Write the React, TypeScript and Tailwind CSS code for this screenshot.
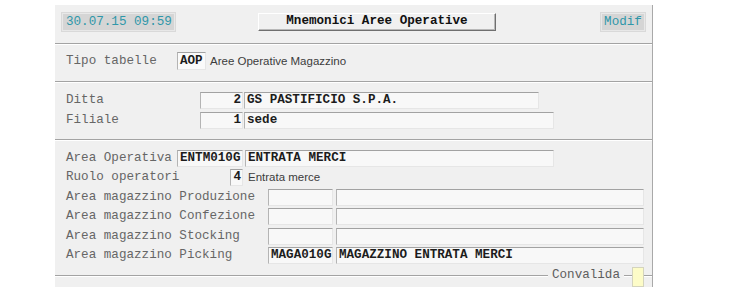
import React from 'react'

const mono = "font-['Liberation_Mono','Courier_New',monospace] text-[12.6px]"
const sans = "font-['Liberation_Sans',Arial,sans-serif] text-[11.5px] text-[#3c3c3c]"

function Sep() {
  return <div className="h-[2px] border-t border-[#a3a3a3] bg-white" />
}

function Box({ w, value = '', align = 'left' }: { w: string; value?: string; align?: 'left' | 'right' }) {
  return (
    <div
      className={`${w} h-[17px] shrink-0 bg-[#f8f8f8] border border-t-[#a2a2a2] border-l-[#b4b4b4] border-r-[#e6e6e6] border-b-[#e6e6e6] ${mono} font-bold text-[#1c1c1c] leading-[15px] whitespace-pre overflow-hidden ${
        align === 'right' ? 'text-right pr-[1px]' : 'pl-[2px]'
      }`}
    >
      {value}
    </div>
  )
}

function Label({ w, children }: { w: string; children: React.ReactNode }) {
  return <div className={`${w} shrink-0 ${mono} text-[#666666] leading-[17px] whitespace-pre`}>{children}</div>
}

export default function App() {
  return (
    <div className="w-[733px] h-[287px] bg-white overflow-hidden">
      <div className="ml-[55px] mt-[5px] w-[598px] h-[282px] bg-[#f0f0f0] border-r border-[#a9a9a9] flex flex-col">
        {/* Header */}
        <div className="h-[38px] flex items-start pt-[8px] pl-[7px] pr-[7px]">
          <div className={`w-[113px] h-[18px] bg-[#d5d5d5] border border-[#e8e8e8] shadow-[0_0_0_1px_#d9d9d9] ${mono} text-[#2f97a9] leading-[16px] pl-[3px]`}>
            30.07.15 09:59
          </div>
          <div
            className={`ml-[83px] w-[238px] h-[18px] border border-t-white border-l-white border-r-[#6f6f6f] border-b-[#6f6f6f] shadow-[inset_-1px_-1px_0_#b8b8b8] ${mono} font-bold text-[#111] leading-[15px] text-center`}
          >
            Mnemonici Aree Operative
          </div>
          <div className={`ml-auto w-[44px] h-[18px] bg-[#d5d5d5] border border-[#e8e8e8] shadow-[0_0_0_1px_#d9d9d9] ${mono} text-[#2f97a9] leading-[16px] text-center`}>
            Modif
          </div>
        </div>
        <Sep />

        {/* Tipo tabelle */}
        <div className="h-[36px] pt-[7px] pl-[11px] flex items-start">
          <Label w="w-[111px] leading-[18px]">Tipo tabelle</Label>
          <div className={`w-[29px] h-[18px] bg-[#fafafa] border border-t-[#a2a2a2] border-l-[#b4b4b4] border-r-[#e6e6e6] border-b-[#e6e6e6] ${mono} font-bold text-[#1c1c1c] leading-[16px] pl-[2px]`}>
            AOP
          </div>
          <div className={`ml-[4px] ${sans} leading-[18px]`}>Aree Operative Magazzino</div>
        </div>
        <Sep />

        {/* Ditta / Filiale */}
        <div className="h-[56px] pt-[9px] pl-[11px] flex flex-col gap-[3px]">
          <div className="flex">
            <Label w="w-[134px]">Ditta</Label>
            <Box w="w-[43px]" value="2" align="right" />
            <div className="w-[1px]" />
            <Box w="w-[295px]" value="GS PASTIFICIO S.P.A." />
          </div>
          <div className="flex">
            <Label w="w-[134px]">Filiale</Label>
            <Box w="w-[43px]" value="1" align="right" />
            <div className="w-[1px]" />
            <Box w="w-[310px]" value="sede" />
          </div>
        </div>
        <Sep />

        {/* Aree */}
        <div className="h-[125px] pt-[9px] pl-[11px] flex flex-col gap-[2.4px]">
          <div className="flex">
            <Label w="w-[111px]">Area Operativa</Label>
            <Box w="w-[66px]" value="ENTM010G" />
            <div className="w-[2px]" />
            <Box w="w-[309px]" value="ENTRATA MERCI" />
          </div>
          <div className="flex">
            <Label w="w-[164px]">Ruolo operatori</Label>
            <Box w="w-[13px]" value="4" align="right" />
            <div className={`ml-[5px] ${sans} leading-[16px]`}>Entrata merce</div>
          </div>
          {['Produzione', 'Confezione', 'Stocking'].map((n) => (
            <div key={n} className="flex">
              <Label w="w-[202px]">{`Area magazzino ${n}`}</Label>
              <Box w="w-[65px]" />
              <div className="w-[3px]" />
              <Box w="w-[308px]" />
            </div>
          ))}
          <div className="flex">
            <Label w="w-[202px]">Area magazzino Picking</Label>
            <Box w="w-[65px]" value="MAGA010G" />
            <div className="w-[3px]" />
            <Box w="w-[308px]" value="MAGAZZINO ENTRATA MERCI" />
          </div>
        </div>

        {/* Convalida */}
        <div className="h-[21px] flex items-start">
          <div className="flex-1 mt-[9px] h-[2px] border-t border-[#a3a3a3] bg-white" />
          <div className={`px-[4px] ${mono} text-[#5e5e5e] leading-[18px]`}>Convalida</div>
          <div className="w-[8px] mt-[9px] h-[2px] border-t border-[#a3a3a3] bg-white" />
          <div className="w-[12px] h-[20px] mt-[1px] bg-[#fdfcc8] border border-[#d4d4bd]" />
          <div className="w-[8px] mt-[9px] h-[2px] border-t border-[#a3a3a3] bg-white" />
        </div>
      </div>
    </div>
  )
}
